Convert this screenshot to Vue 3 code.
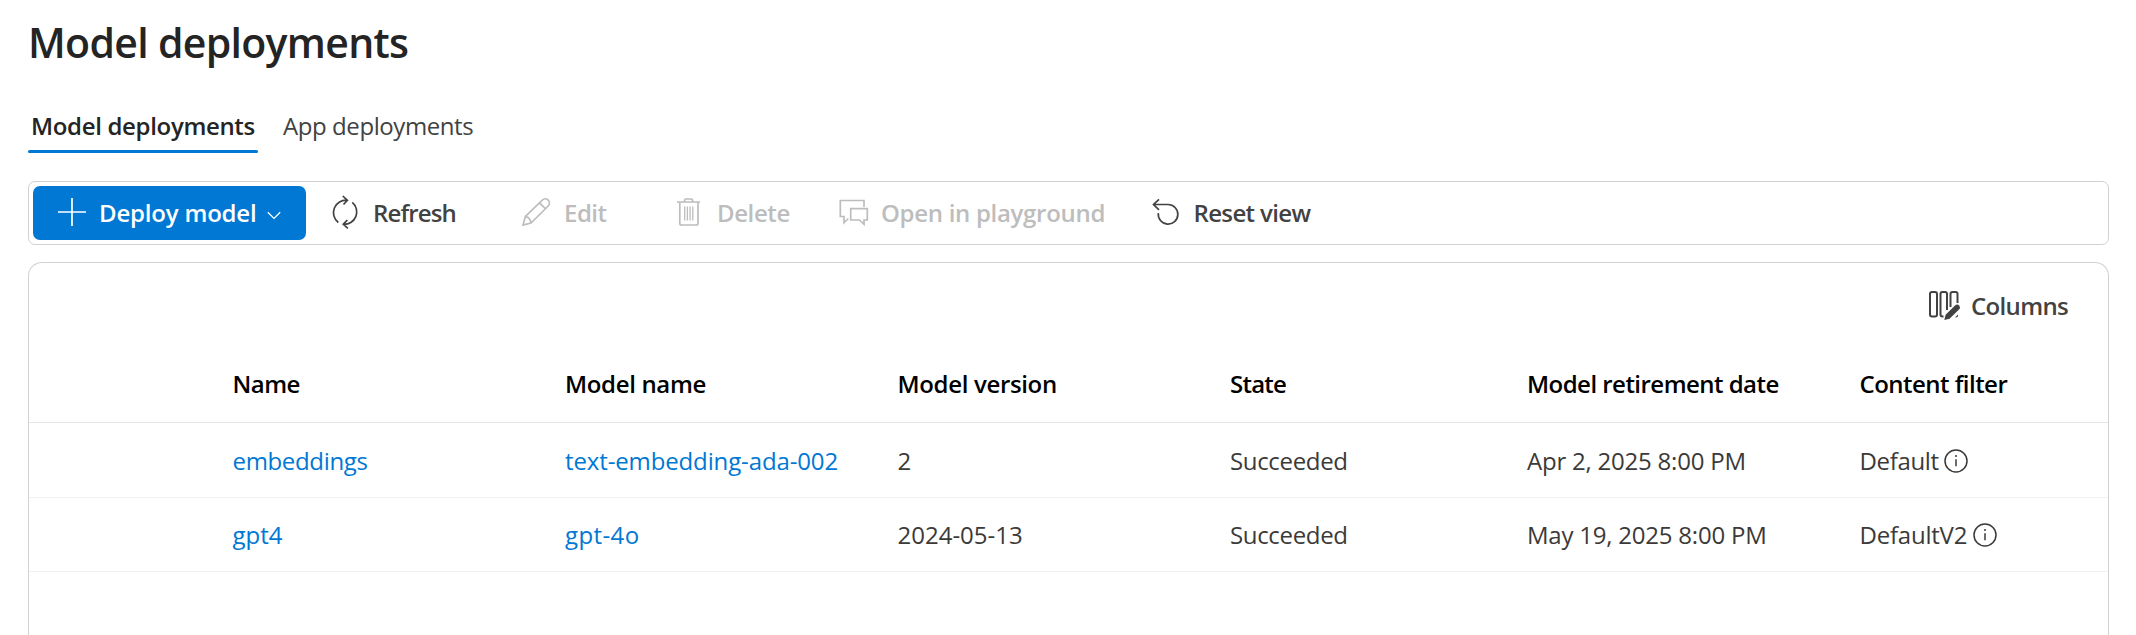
<script setup>
const headers = [
  { text: 'Name', fit: 'snug' },
  { text: 'Model name', fit: 'close' },
  { text: 'Model version', fit: 'close' },
  { text: 'State', fit: 'narrow' },
  { text: 'Model retirement date', fit: 'snug' },
  { text: 'Content filter', fit: 'snug' }
]
const rows = [
  { name: 'embeddings', model: 'text-embedding-ada-002', version: '2', state: 'Succeeded', retires: 'Apr 2, 2025 8:00 PM', filter: 'Default', nameFit: 'close', modelFit: 'slight', filterFit: 'close' },
  { name: 'gpt4', model: 'gpt-4o', version: '2024-05-13', state: 'Succeeded', retires: 'May 19, 2025 8:00 PM', filter: 'DefaultV2', nameFit: 'natural', modelFit: 'wide', filterFit: '' }
]
</script>

<template>
  <main class="page">
    <h1 class="title">Model deployments</h1>

    <nav class="tabs">
      <a class="tab active">Model deployments</a>
      <a class="tab">App deployments</a>
    </nav>

    <div class="toolbar">
      <button class="primary">
        <svg class="icon plus" viewBox="0 0 28 28"><path d="M14 0V28M0 14H28" /></svg>
        <span class="primary-label">Deploy model</span>
        <svg class="chevron" viewBox="0 0 14 9"><path d="M.8 1.2 7 7.4 13.2 1.2" /></svg>
      </button>
      <button class="tool refresh">
        <svg class="icon" viewBox="0 0 28 28">
          <path d="M7.3 23.5A12.5 12.5 0 0 1 16.3 1.2M11.8-3l4.6 4.3-3.9 4.2M21.3 3.3A12.5 12.5 0 0 1 12.3 25.3M16.3 21l-4 4.3 4.6 4" />
        </svg>
        <span>Refresh</span>
      </button>
      <button class="tool edit disabled">
        <svg class="icon" viewBox="0 0 28 28">
          <path d="M1 26 3.4 17.5 20.3 1.2A4 4 0 0 1 26.2 7L9 24ZM3.4 17.5Q8.5 18.5 9 24M17.6 3.8l6 6" />
        </svg>
        <span>Edit</span>
      </button>
      <button class="tool delete disabled">
        <svg class="icon" viewBox="0 0 28 28">
          <path d="M2 3H25M4.8 3V24.2Q4.8 26 6.6 26H21.2Q23 26 23 24.2V3M9.6 3V1.5Q9.6 0 11 0H16.2Q17.6 0 17.6 1.5V3" />
          <path class="fine" d="M9.7 7.5V21.5M12.4 7.5V21.5M15.1 7.5V21.5M17.8 7.5V21.5" />
        </svg>
        <span>Delete</span>
      </button>
      <button class="tool play disabled">
        <svg class="icon" viewBox="0 0 28 28">
          <path d="M25 8V1.5H1.3V17.5H5V23.8L9.3 19.5M11.7 9.7H28.3V21H25V25.3L20.5 21H11.7Z" />
        </svg>
        <span>Open in playground</span>
      </button>
      <button class="tool reset">
        <svg class="icon" viewBox="0 0 28 28">
          <path d="M7 .3 1.5 5.5 7 10.8M1.5 5.5H16A9.8 9.8 0 1 1 6.3 14.2" />
        </svg>
        <span>Reset view</span>
      </button>
    </div>

    <section class="panel">
      <div class="panel-bar">
        <button class="columns">
          <svg class="columns-icon" viewBox="0 0 32 30">
            <path d="M3 1H6Q8 1 8 3V23.5Q8 25.5 6 25.5H3Q1 25.5 1 23.5V3Q1 1 3 1ZM14.5 25.5H13.5Q11.5 25.5 11.5 23.5V3Q11.5 1 13.5 1H16Q18 1 18 3V19M21.5 16V3Q21.5 1 23.5 1H26.5Q28.5 1 28.5 3V12" />
            <path class="pen" d="M15.3 29 16.6 23.8 26 14.5Q28.2 12.7 30.2 14.5 31.8 16.5 30 18.6L20.5 27.8ZM26 26.5 29 23.5V25.5Q28 26.5 26 26.5Z" />
          </svg>
          <span>Columns</span>
        </button>
      </div>

      <div class="row head">
        <span v-for="h in headers" :key="h.text" :class="h.fit">{{ h.text }}</span>
      </div>
      <div v-for="r in rows" :key="r.name" class="row body">
        <a class="link" :class="r.nameFit">{{ r.name }}</a>
        <a class="link" :class="r.modelFit">{{ r.model }}</a>
        <span class="natural">{{ r.version }}</span>
        <span class="close">{{ r.state }}</span>
        <span>{{ r.retires }}</span>
        <span class="filter" :class="r.filterFit">
          {{ r.filter }}
          <svg class="info" viewBox="0 0 24 24">
            <circle cx="12" cy="12" r="11" />
            <path d="M12 10.3V17.2M12 6V8" />
          </svg>
        </span>
      </div>
    </section>
  </main>
</template>

<style>
html, body { background: #fff; overflow: hidden; }
</style>

<style scoped>
.page {
  box-sizing: border-box;
  height: 635px;
  padding: 0 27px 0 28px;
  overflow: hidden;
  display: flex;
  flex-direction: column;
  background: #fff;
  color: #3b3a39;
  font: 400 24px/32px "Open Sans", "Noto Sans", sans-serif;
}
.title {
  margin: 0;
  height: 84px;
  line-height: 84px;
  font-size: 41px;
  font-weight: 600;
  letter-spacing: -0.69px;
  color: #242424;
}
.tabs { display: flex; gap: 25px; height: 69px; }
.tab {
  position: relative;
  padding-top: 26px;
  color: #424242;
  letter-spacing: -0.42px;
}
.tab.active {
  box-sizing: border-box;
  width: 230px;
  padding-left: 3px;
  font-weight: 600;
  letter-spacing: -0.33px;
  color: #242424;
}
.tab.active::after {
  content: "";
  position: absolute;
  left: 0;
  right: 0;
  bottom: 0;
  height: 3px;
  border-radius: 2px;
  background: #0078d4;
}
.toolbar {
  box-sizing: border-box;
  flex: none;
  display: flex;
  align-items: center;
  height: 64px;
  margin-top: 28px;
  padding-left: 4px;
  border: 1px solid #d1d1d1;
  border-radius: 7px;
}
button {
  box-sizing: border-box;
  display: flex;
  align-items: center;
  flex: none;
  margin: 0;
  border: 0;
  background: none;
  color: #424242;
  font: inherit;
  font-weight: 600;
  white-space: nowrap;
}
svg {
  flex: none;
  overflow: visible;
  fill: none;
  stroke: currentColor;
  stroke-width: 1.7;
}
.icon { width: 28px; height: 28px; }
.primary {
  width: 273px;
  height: 54px;
  padding: 0 0 0 25px;
  border-radius: 7px;
  background: #0078d4;
  color: #fff;
}
.plus { position: relative; top: -1px; }
.primary-label { box-sizing: border-box; width: 181px; padding-left: 13px; text-align: left; letter-spacing: -0.19px; }
.chevron { width: 14px; height: 9px; margin-top: 4px; stroke-width: 1.3; }
.tool { gap: 14px; height: 54px; padding: 0 0 0 25px; }
.refresh { width: 191px; letter-spacing: -0.85px; }
.edit { width: 153px; letter-spacing: -0.5px; }
.delete { width: 164px; letter-spacing: -0.4px; }
.play { width: 312.5px; letter-spacing: -0.3px; }
.reset { letter-spacing: -0.65px; }
.disabled { color: #bdbdbd; }
.fine { stroke-width: 1.3; }
.panel {
  flex: 1;
  margin-top: 17px;
  border: 1px solid #d1d1d1;
  border-bottom: 0;
  border-radius: 14px 14px 0 0;
}
.panel-bar { display: flex; justify-content: flex-end; height: 83px; padding-right: 38px; }
.columns { gap: 10px; width: 141px; height: 85px; padding: 0; letter-spacing: -0.65px; }
.columns-icon { width: 32px; height: 30px; stroke-width: 2; }
.pen { fill: currentColor; stroke: none; }
.row {
  display: grid;
  grid-template-columns: 332.5px 332.5px 332.5px 297px 332.5px auto;
  align-items: center;
  padding-left: 203.5px;
  height: 73px;
  border-bottom: 1px solid #f2f2f2;
  letter-spacing: -0.22px;
}
.head {
  height: 76px;
  border-bottom-color: #e6e6e6;
  color: #000;
  font-weight: 600;
}
.head + .body { height: 73px; padding-top: 1px; }
.narrow { letter-spacing: -0.75px; }
.snug { letter-spacing: -0.53px; }
.close { letter-spacing: -0.34px; }
.slight { letter-spacing: -0.13px; }
.natural { letter-spacing: 0; }
.wide { letter-spacing: 0.4px; }
.link { color: #0078d4; }
.filter { display: flex; align-items: center; gap: 5.5px; }
.info { width: 24px; height: 24px; stroke-width: 1.5; }
</style>
